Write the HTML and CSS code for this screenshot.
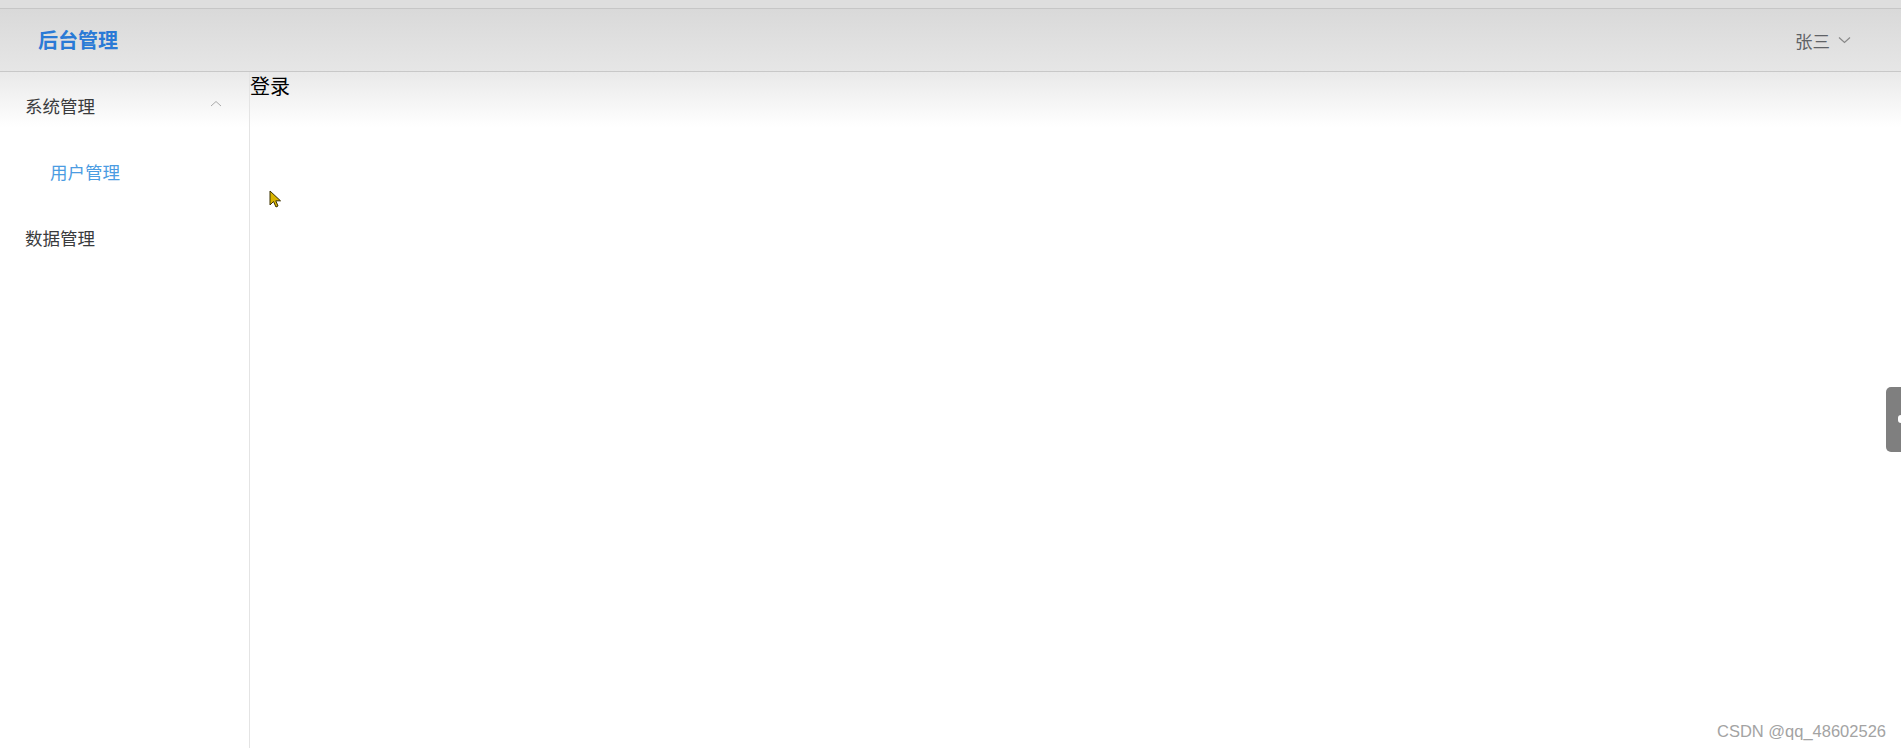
FILE: index.html
```html
<!DOCTYPE html>
<html lang="zh-CN">
<head>
  <meta charset="UTF-8" />
  <meta name="viewport" content="width=device-width, initial-scale=1" />
  <title>后台管理</title>
  <link rel="stylesheet" href="styles.css">
</head>
<body>
  <div class="topbar"></div>
  <header class="header">
    <div class="logo">后台管理</div>
    <div class="user">
      <span>张三</span>
      <svg class="caret" width="13" height="8" viewBox="0 0 13 8">
        <path d="M1 1.5 L6.5 6.5 L12 1.5" fill="none" stroke="#888" stroke-width="1.2"/>
      </svg>
    </div>
  </header>

  <div class="layout">
    <aside class="sidebar">
      <ul class="menu">
        <li class="submenu-title">
          <span>系统管理</span>
          <svg class="arrow" width="12" height="7" viewBox="0 0 12 7">
            <path d="M1 6 L6 1.5 L11 6" fill="none" stroke="#aaa" stroke-width="1"/>
          </svg>
        </li>
        <li class="menu-item child active">用户管理</li>
        <li class="menu-item">数据管理</li>
      </ul>
    </aside>
    <main class="main">
      <div class="page-title">登录</div>
    </main>
  </div>

  <!-- mouse pointer left in the screenshot -->
  <svg class="pointer" width="14" height="20" viewBox="0 0 14 20">
    <path d="M1 1 L1 15 L4.5 11.5 L7 17 L9 16 L6.8 10.8 L11.5 10.8 Z" fill="#d9b400" stroke="#3a3000" stroke-width="1"/>
  </svg>

  <div class="side-tab"><span></span></div>
  <div class="watermark">CSDN @qq_48602526</div>
</body>
</html>
```

FILE: styles.css
```css
html, body {
  height: 100%;
}
body {
  margin: 0;
  font-family: "Noto Sans CJK SC", "Noto Sans", sans-serif;
  background: #fff;
  display: flex;
  flex-direction: column;
  overflow: hidden;
}

/* thin strip above the header */
.topbar {
  height: 8px;
  background: #dedede;
  border-bottom: 1px solid #c6c6c6;
  flex-shrink: 0;
}

.header {
  height: 62px;
  background: linear-gradient(#d9d9d9, #e6e6e6);
  border-bottom: 1px solid #c8c8c8;
  display: flex;
  align-items: center;
  justify-content: space-between;
  padding: 0 50px 0 38px;
  flex-shrink: 0;
}
.logo {
  color: #2a7ad6;
  font-size: 20px;
  font-weight: bold;
  line-height: 20px;
}
.user {
  display: flex;
  align-items: center;
  gap: 8px;
  color: #5f6266;
  font-size: 17.5px;
}
.caret {
  display: block;
}

/* body under header */
.layout {
  flex: 1;
  display: flex;
  background: linear-gradient(#e9e9e9, #fff 55px);
}
.sidebar {
  width: 249px;
  border-right: 1px solid #e4e4e4;
  flex-shrink: 0;
}
.menu {
  list-style: none;
  margin: 0;
  padding: 0;
}
.submenu-title,
.menu-item {
  height: 66px;
  display: flex;
  align-items: center;
  padding-left: 25px;
  font-size: 17.5px;
  color: #3a3b3d;
}
.submenu-title {
  justify-content: space-between;
  padding-right: 27px;
}
.arrow {
  display: block;
  margin-top: -4px;
}
.menu-item.child {
  padding-left: 50px;
}
.menu-item.active {
  color: #4b9ce2;
}

.main {
  flex: 1;
}
.page-title {
  font-size: 20px;
  line-height: 28px;
  color: #000;
}

.pointer {
  position: absolute;
  left: 269px;
  top: 190px;
}

/* collapsed drawer handle on the right edge */
.side-tab {
  position: absolute;
  right: 0;
  top: 387px;
  width: 15px;
  height: 65px;
  background: #7f7f7f;
  border-radius: 5px 0 0 5px;
}
.side-tab span {
  position: absolute;
  right: -2px;
  top: 28px;
  width: 5px;
  height: 8px;
  background: #fff;
  border-radius: 3px 0 0 3px;
}

.watermark {
  position: absolute;
  right: 15px;
  bottom: 7px;
  font-family: "Liberation Sans", Arial, sans-serif;
  font-size: 16.5px;
  color: #a3a3a3;
}
```
